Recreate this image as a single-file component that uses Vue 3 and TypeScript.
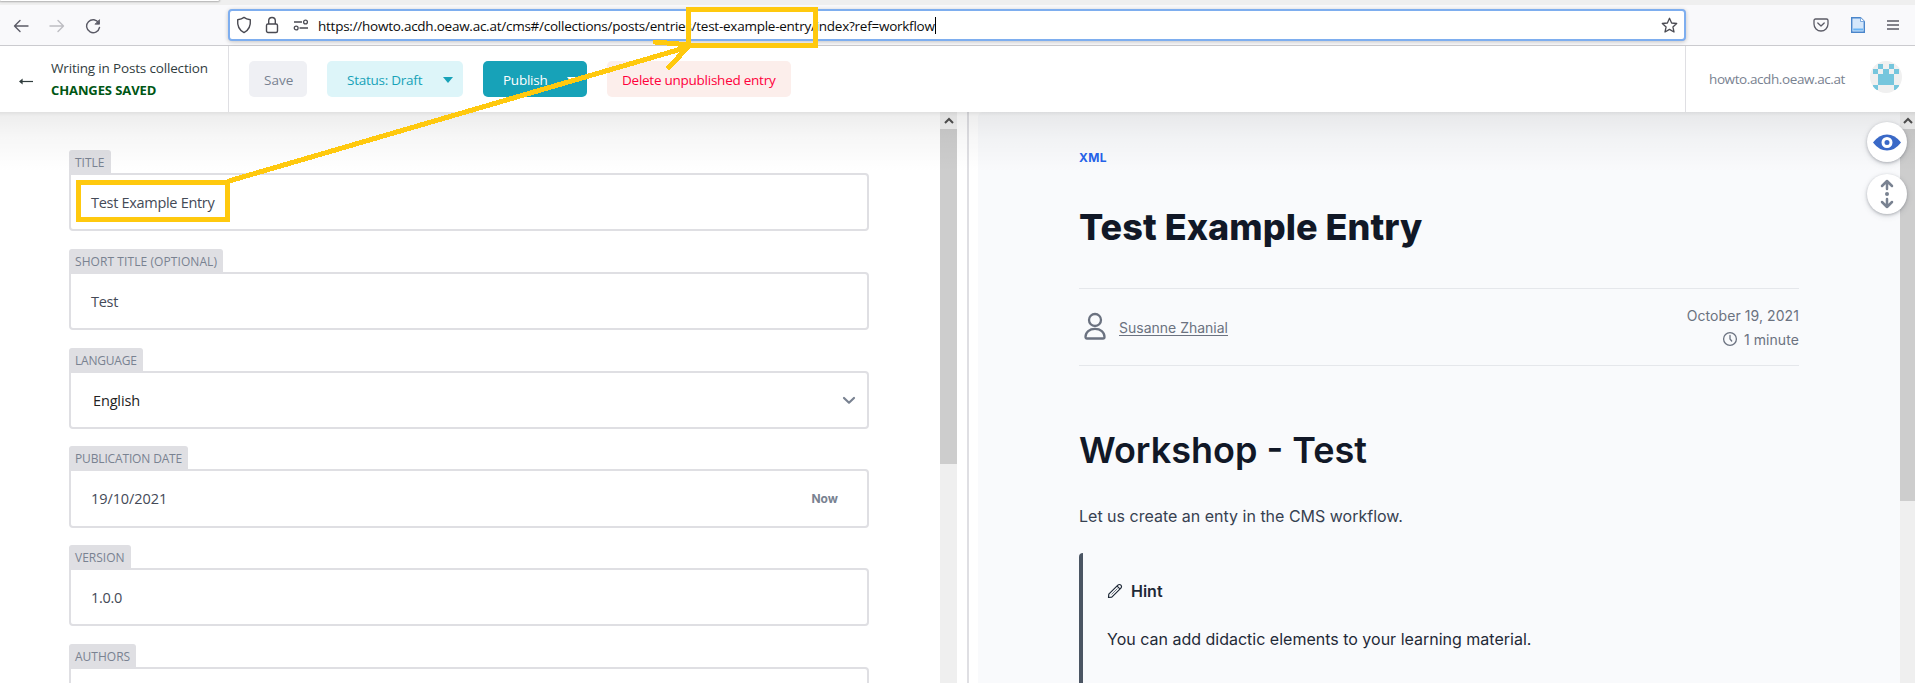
<script setup lang="ts">
interface Field {
  label: string
  value: string
  kind: 'text' | 'select' | 'date'
  tracking: number
}

const fields: Field[] = [
  { label: 'TITLE', value: 'Test Example Entry', kind: 'text', tracking: 0 },
  { label: 'SHORT TITLE (OPTIONAL)', value: 'Test', kind: 'text', tracking: 0.08 },
  { label: 'LANGUAGE', value: 'English', kind: 'select', tracking: -0.2 },
  { label: 'PUBLICATION DATE', value: '19/10/2021', kind: 'date', tracking: -0.15 },
  { label: 'VERSION', value: '1.0.0', kind: 'text', tracking: 0 },
  { label: 'AUTHORS', value: '', kind: 'text', tracking: 0 },
]

const url = 'https://howto.acdh.oeaw.ac.at/cms#/collections/posts/entries/test-example-entry/index?ref=workflow'
</script>

<template>
  <div class="window">
    <div class="tabstrip"><div class="tab"></div></div>
    <div class="toolbar">
      <div class="nav">
        <svg width="16" height="16" viewBox="0 0 16 16" fill="none" stroke="#5b5b66" stroke-width="1.4" stroke-linecap="round" stroke-linejoin="round"><path d="M15 8H1.5M7 2.5L1.5 8L7 13.5" /></svg>
        <svg width="16" height="16" viewBox="0 0 16 16" fill="none" stroke="#bdbdc2" stroke-width="1.4" stroke-linecap="round" stroke-linejoin="round"><path d="M1 8H14.5M9 2.5L14.5 8L9 13.5" /></svg>
        <svg width="16" height="16" viewBox="0 0 16 16" fill="none" stroke="#5b5b66" stroke-width="1.4" stroke-linecap="round"><path d="M13.8 5A6.5 6.5 0 1 0 14.5 9.5" /><path d="M14.5 2V6.2H10.3Z" fill="#5b5b66" stroke-width=".8" stroke-linejoin="round" /></svg>
      </div>
      <div class="urlbar">
        <svg class="shield" width="16" height="18" viewBox="0 0 16 18" fill="none" stroke="#4a4a52" stroke-width="1.4" stroke-linejoin="round"><path d="M8 1.4C6 3 3.800 3.500 1.700 3.800C1.200 9.500 3.600 14.500 8 16.600C12.400 14.500 14.800 9.500 14.300 3.800C12.200 3.500 10 3 8 1.400Z" /></svg>
        <svg class="lock" width="14" height="18" viewBox="0 0 14 18" fill="none" stroke="#4a4a52" stroke-width="1.4"><rect x="1.5" y="8" width="11" height="8.5" rx="1.5" /><path d="M3.700 8V4.800a3.300 3.300 0 0 1 6.600 0V8" /></svg>
        <svg class="perm" width="16" height="12" viewBox="0 0 16 12" fill="none" stroke="#4a4a52" stroke-width="1.3"><path d="M1 3H9M6.500 9H15" /><circle cx="12.500" cy="3" r="1.900" /><circle cx="3.200" cy="9" r="1.900" /></svg>
        <span class="url">{{ url }}</span><i class="caret"></i>
        <svg class="star" width="17" height="17" viewBox="0 0 17 17" fill="none" stroke="#4a4a52" stroke-width="1.3" stroke-linejoin="round"><path d="M8.500 1.300L10.600 6L15.700 6.500L11.900 9.900L13 15L8.500 12.400L4 15L5.100 9.900L1.300 6.500L6.400 6Z" /></svg>
      </div>
      <div class="tools">
        <svg width="16" height="14" viewBox="0 0 16 14" fill="none" stroke="#5b5b66" stroke-width="1.3" stroke-linecap="round" stroke-linejoin="round"><path d="M2.500 1H13.500A1.500 1.500 0 0 1 15 2.500V6A7 7 0 0 1 1 6V2.500A1.500 1.500 0 0 1 2.500 1Z" /><path d="M4.800 5L8 8L11.200 5" /></svg>
        <svg width="16" height="18" viewBox="0 0 16 18"><path d="M1.700 1.700H10.500L14.300 5.500V16.300H1.700Z" fill="#d4e7fb" stroke="#4a86cb" stroke-width="1.4" /><path d="M10.500 1.700V5.500H14.300" fill="#fff" stroke="#7ba9df" /><path d="M3.200 12.500H13V14.500H3.200Z" fill="#68b4f5" /></svg>
        <svg width="12" height="10" viewBox="0 0 12 10" stroke="#5b5b66" stroke-width="1.3"><path d="M0 1H12M0 5H12M0 9H12" /></svg>
      </div>
    </div>

    <header class="header">
      <div class="back">
        <svg width="16" height="9" viewBox="0 0 16 9" fill="none" stroke="#313d3e" stroke-width="1.2"><path d="M15 4.500H2" /><path d="M4.600 1.600L1 4.500L4.600 7.400Z" fill="#313d3e" stroke="none" /></svg>
        <div class="status">
          <div class="coll">Writing in Posts collection</div>
          <div class="saved">CHANGES SAVED</div>
        </div>
      </div>
      <div class="actions">
        <div class="btn save"><span>Save</span></div>
        <div class="btn draft"><span>Status: Draft</span><i class="tri"></i></div>
        <div class="btn publish"><span>Publish</span><i class="tri"></i></div>
        <div class="btn delete"><span>Delete unpublished entry</span></div>
      </div>
      <div class="site">
        <span>howto.acdh.oeaw.ac.at</span>
        <svg width="32" height="32" viewBox="0 0 32 32" shape-rendering="crispEdges"><defs><clipPath id="avatar"><circle cx="16" cy="16" r="16" /></clipPath></defs><g clip-path="url(#avatar)"><rect width="32" height="32" fill="#f0f0f0" /><path fill="#76c6dd" d="M8 3h5v5H8zM19 3h5v5h-5zM3 8h5v5H3zM13 8h6v5h-6zM24 8h5v5h-5zM8 13h16v11H8zM3 24h5v5H3zM24 24h5v5h-5z" /></g></svg>
      </div>
    </header>

    <main class="main">
      <section class="editor">
        <div class="fields">
          <div v-for="f in fields" :key="f.label" class="field" :class="f.kind">
            <div class="label"><span :style="{ letterSpacing: f.tracking + 'px' }">{{ f.label }}</span></div>
            <div class="box">
              <span class="value">{{ f.value }}</span>
              <span v-if="f.kind === 'date'" class="now">Now</span>
              <svg v-if="f.kind === 'select'" width="14" height="9" viewBox="0 0 14 9" fill="none" stroke="#798291" stroke-width="2.2" stroke-linecap="round" stroke-linejoin="round"><path d="M2 2L7 6.700L12 2" /></svg>
            </div>
          </div>
        </div>
        <div class="scroll s-left"><div class="up"><svg width="10" height="7" viewBox="0 0 10 7" fill="none" stroke="#505050" stroke-width="2"><path d="M1 6L5 2L9 6" /></svg></div><div class="thumb"></div></div>
      </section>
      <div class="split"></div>
      <section class="preview">
        <article class="article">
          <div class="tag">XML</div>
          <h1>Test Example Entry</h1>
          <div class="meta">
            <div class="author">
              <svg width="24" height="29" viewBox="0 0 24 29" fill="none" stroke="#6b7280" stroke-width="2.3"><circle cx="12" cy="8" r="6" /><path d="M2.500 25C2.500 20 6.500 16.800 12 16.800S21.500 20 21.500 25Q21.500 26.500 20 26.500H4Q2.500 26.500 2.500 25Z" /></svg>
              <span>Susanne Zhanial</span>
            </div>
            <div class="when">
              <div>October 19, 2021</div>
              <div class="mins"><svg width="16" height="16" viewBox="0 0 16 16" fill="none" stroke="#6b7280" stroke-width="1.3" stroke-linecap="round"><circle cx="8" cy="8" r="6.400" /><path d="M8 4.500V8L9.700 10" /></svg><span>1 minute</span></div>
            </div>
          </div>
          <h2>Workshop - Test</h2>
          <p class="lead">Let us create an enty in the CMS workflow.</p>
          <aside class="hint">
            <div class="hint-title"><svg width="16" height="16" viewBox="0 0 16 16" fill="none" stroke="#1f2937" stroke-width="1.2" stroke-linejoin="round"><path d="M1.500 14.500L1.800 11.200L10.900 2.100A2 2 0 0 1 13.900 5.100L4.800 14.200Z" /><path d="M10.200 3.200L12.800 5.800" /><path d="M4.500 11.500L10.500 5.500" stroke-width=".6" /></svg><span>Hint</span></div>
            <p><span>You can add didactic elements to your learning material.</span></p>
          </aside>
        </article>
        <div class="scroll s-right"><div class="up"><svg width="10" height="7" viewBox="0 0 10 7" fill="none" stroke="#505050" stroke-width="2"><path d="M1 6L5 2L9 6" /></svg></div><div class="thumb"></div></div>
      </section>
      <div class="shade"></div>
    </main>

    <div class="toggles">
      <div class="round"><svg width="28" height="17" viewBox="0 0 28 17"><path d="M0 8.500Q6 .5 14 .5T28 8.500Q22 16.500 14 16.500T0 8.500Z" fill="#3a69c7" /><circle cx="14" cy="8.500" r="4" fill="none" stroke="#fff" stroke-width="3" /></svg></div>
      <div class="round"><svg width="14" height="30" viewBox="0 0 14 30" fill="none" stroke="#798291" stroke-width="2.5" stroke-linecap="round" stroke-linejoin="round"><path d="M7 10V2M2 7L7 2L12 7M7 20V28M2 23L7 28L12 23" /><circle cx="7" cy="15" r="2" fill="#798291" stroke="none" /></svg></div>
    </div>

    <svg class="marks" width="1915" height="683" viewBox="0 0 1915 683" fill="none" stroke="#ffc90e" shape-rendering="crispEdges">
      <rect x="78.500" y="182.500" width="149" height="37" stroke-width="5" />
      <rect x="688.500" y="9.500" width="127" height="36" stroke-width="5" />
      <path d="M229 181L688 47M655 42L690 45L669 67" stroke-width="5" stroke-linecap="round" stroke-linejoin="round" />
    </svg>
  </div>
</template>

<style>
html, body { margin: 0; overflow: hidden; }
</style>

<style scoped>
* { box-sizing: border-box; }
.window { position: relative; width: 1915px; height: 683px; overflow: hidden; background: #fff; display: flex; flex-direction: column; font-family: "Open Sans", "Noto Sans", sans-serif; }
svg { display: block; flex: none; }
span { white-space: nowrap; }
.tabstrip { height: 5px; background: #efefef; flex: none; }
.tab { width: 219px; height: 1px; background: #fff; border-radius: 0 0 3px 3px; box-shadow: 0 0 2px 1px rgba(0,0,0,.28); }
.toolbar { height: 41px; flex: none; background: #f9f9fb; border-bottom: 1px solid #cbcbcf; display: flex; align-items: flex-start; }
.nav { width: 228px; padding: 13px 0 0 13px; display: flex; gap: 20px; }
.urlbar { width: 1458px; height: 32px; margin-top: 4px; border: 2px solid #7eaeef; border-radius: 4px; background: #fff; box-shadow: 0 1px 4px rgba(0,0,0,.22); display: flex; align-items: center; padding: 0 6px; }
.lock { margin-left: 13px; }
.perm { margin-left: 14px; }
.url { margin-left: 9px; padding-top: 1px; font-size: 13.5px; color: #0c0c0d; letter-spacing: -.25px; }
.caret { width: 1px; height: 17px; background: #000; }
.star { margin-left: auto; }
.tools { margin-left: 127px; height: 40px; display: flex; align-items: center; gap: 21px; }
.header { height: 66px; flex: none; display: flex; background: #fff; }
.back { width: 229px; border-right: 1px solid #dfdfe3; display: flex; padding-left: 18px; }
.back svg { margin-top: 31px; }
.status { margin-left: 17px; padding-top: 11px; white-space: nowrap; }
.coll { font-size: 13.5px; line-height: 23px; height: 22px; color: #313d3e; letter-spacing: -.17px; }
.saved { font-size: 13px; line-height: 22px; font-weight: 700; color: #005614; letter-spacing: -.1px; }
.actions { flex: 1; display: flex; gap: 20px; padding: 15px 0 0 20px; }
.btn { height: 36px; border-radius: 5px; display: flex; align-items: center; font-size: 13.5px; letter-spacing: -.25px; padding: 1px 15px 0; }
.save { width: 58px; background: #eff0f4; color: #798291; letter-spacing: 0; }
.draft { width: 136px; background: #ddf5f9; color: #17a2b8; padding: 1px 10px 0 20px; justify-content: space-between; }
.publish { width: 104px; background: #17a2b8; color: #fff; padding: 1px 10px 0 20px; justify-content: space-between; }
.delete { width: 184px; background: #fceeeb; color: #ff003b; }
.tri { border: 5px solid transparent; border-top: 6px solid currentColor; border-bottom: 0; }
.site { width: 230px; border-left: 1px solid #dfdfe3; display: flex; color: #798291; font-size: 13.5px; letter-spacing: -.4px; padding-left: 23px; }
.site span { width: 161px; line-height: 67px; }
.site svg { margin-top: 15px; }
.main { position: relative; flex: 1; min-height: 0; display: flex; }
.editor { width: 957px; display: flex; justify-content: space-between; overflow: hidden; }
.fields { padding: 38px 0 0 69px; }
.field { width: 800px; height: 99px; }
.field.select { height: 98px; }
.label { display: inline-flex; align-items: center; height: 23px; padding: 2px 6px 0; background: #dfdfe3; border-radius: 3px 3px 0 0; color: #798291; font-size: 12px; font-weight: 500; vertical-align: top; }
.box { height: 58px; border: 2px solid #dfdfe3; border-radius: 0 4px 4px 4px; background: #fff; display: flex; align-items: center; padding: 0 20px; color: #444a57; font-size: 14.5px; letter-spacing: -.3px; }
.date .value { letter-spacing: -.08px; }
.date .box { height: 59px; }
.select .box { padding: 0 11px 0 22px; color: #222; letter-spacing: -.15px; justify-content: space-between; }
.now { margin-left: auto; margin-right: 9px; font: 700 12px Inter, sans-serif; letter-spacing: 0; color: #798291; }
.scroll { background: #efefef; height: 571px; flex: none; }
.s-left { width: 17px; }
.s-right { width: 15px; }
.up { height: 17px; display: flex; align-items: center; justify-content: center; background: #f0f0f0; }
.thumb { background: #cdcdcd; height: 335px; }
.s-right .thumb { height: 372px; }
.split { width: 2px; margin: 0 9px 0 10px; background: #dfdfe3; }
.preview { flex: 1; min-width: 0; background: #f9fafc; border-radius: 5px 0 0 0; display: flex; overflow: hidden; font-family: Inter, sans-serif; }
.article { margin-left: 101px; width: 720px; margin-right: 101px; flex: none; color: #111827; }
.tag { margin-top: 36px; height: 20px; line-height: 20px; font-size: 12px; font-weight: 700; color: #2563eb; letter-spacing: .3px; }
h1 { margin: 37px 0 0; height: 45px; line-height: 45px; font-size: 36px; font-weight: 800; letter-spacing: .05px; white-space: nowrap; }
.meta { margin-top: 38px; height: 78px; border-top: 1px solid #e5e7eb; border-bottom: 1px solid #e5e7eb; display: flex; justify-content: space-between; align-items: center; color: #6b7280; font-size: 14px; }
.author { display: flex; align-items: center; gap: 12px; padding: 0 0 1px 4px; }
.author span { text-decoration: underline; text-underline-offset: 2px; line-height: 20px; padding-top: 2px; }
.when { line-height: 24px; text-align: right; padding-top: 1px; letter-spacing: .08px; }
.mins { display: flex; justify-content: flex-end; align-items: center; gap: 6px; }
.mins svg { margin-top: -1px; }
h2 { margin: 62px 0 0; height: 45px; line-height: 45px; font-size: 36px; font-weight: 600; white-space: nowrap; }
.lead { margin: 29px 0 0; height: 28px; line-height: 28px; font-size: 16px; color: #374151; }
.hint { margin-top: 23px; height: 200px; border-left: 4px solid #4b5563; border-radius: 4px 0 0 4px; padding: 24px 24px; color: #1f2937; font-size: 16px; }
.hint-title { height: 28px; display: flex; align-items: center; gap: 8px; font-weight: 600; }
.hint p { margin: 20px 0 0; line-height: 28px; }
.shade { position: absolute; inset: 0 0 auto 0; height: 60px; background: linear-gradient(rgba(0,0,0,.12), rgba(0,0,0,.065) 4px, rgba(0,0,0,.03) 26px, rgba(0,0,0,0)); }
.toggles { position: absolute; left: 1867px; top: 122px; display: flex; flex-direction: column; gap: 12px; }
.round { width: 40px; height: 40px; border-radius: 50%; background: #fff; box-shadow: 0 2px 6px rgba(68,74,87,.15), 0 1px 3px rgba(68,74,87,.35); display: flex; align-items: center; justify-content: center; }
.marks { position: absolute; inset: 0; }
</style>
